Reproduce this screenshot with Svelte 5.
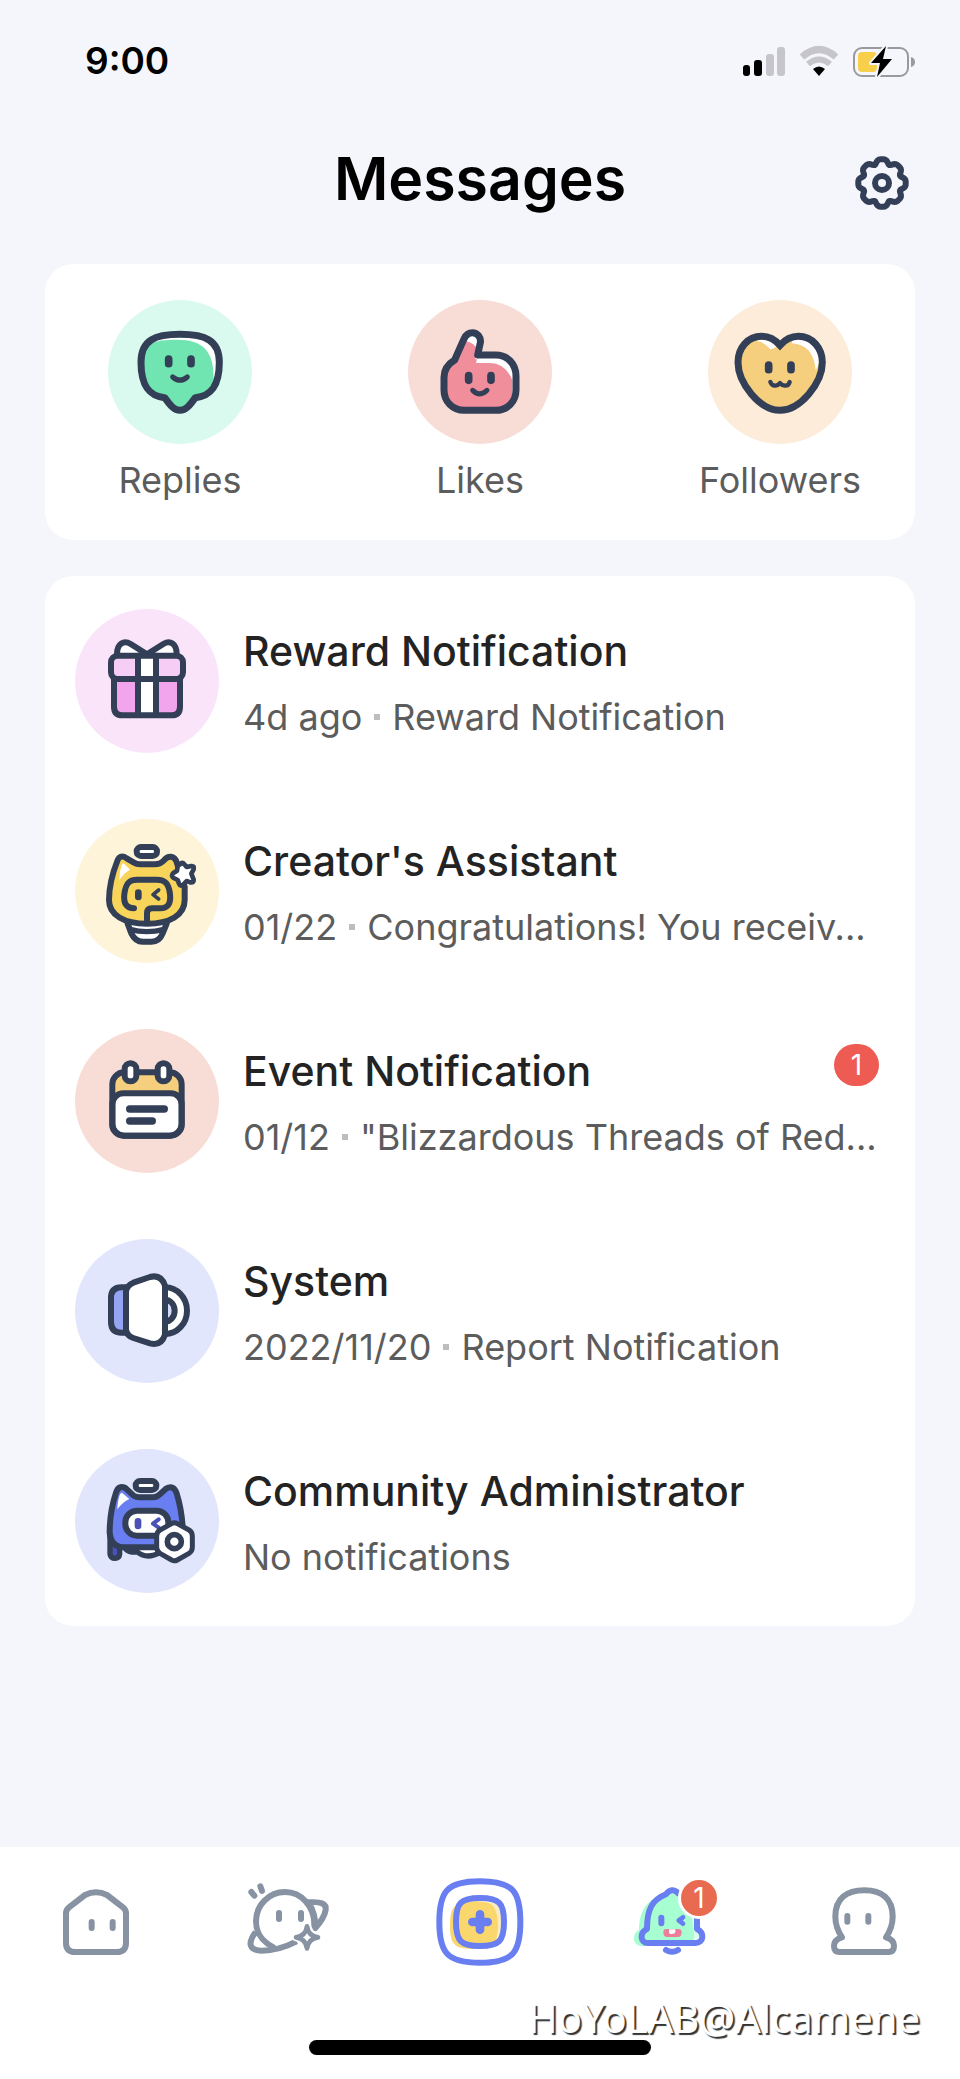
<script>
  const shortcuts = [
    { id: 'replies', label: 'Replies', tint: '#dafaef' },
    { id: 'likes', label: 'Likes', tint: '#f8ddd7' },
    { id: 'followers', label: 'Followers', tint: '#fcecd9' }
  ];

  const messages = [
    { id: 'reward', title: 'Reward Notification', date: '4d ago', text: 'Reward Notification', tint: '#fae4fa' },
    { id: 'creator', title: "Creator's Assistant", date: '01/22', text: 'Congratulations! You receiv...', tint: '#fdf4da' },
    { id: 'event', title: 'Event Notification', date: '01/12', text: '"Blizzardous Threads of Red...', tint: '#f8ddd7', unread: 1 },
    { id: 'system', title: 'System', date: '2022/11/20', text: 'Report Notification', tint: '#e2e6fd' },
    { id: 'admin', title: 'Community Administrator', date: '', text: 'No notifications', tint: '#e2e6fd' }
  ];

  // Eight-lobed outline of the settings gear.
  const gear = Array.from({ length: 160 }, (_, i) => {
    const t = (i / 160) * Math.PI * 2;
    const r = 22.2 + 2.1 * Math.cos(8 * t) - 0.6 * Math.cos(16 * t);
    return `${(28 + r * Math.sin(t)).toFixed(2)},${(28 - r * Math.cos(t)).toFixed(2)}`;
  }).join(' ');
</script>

<div class="screen">
  <div class="status">
    <span class="clock">9:00</span>
    <span class="signals">
      <svg width="42" height="33" viewBox="744 44 42 33" aria-hidden="true">
        <rect x="744" y="64" width="7" height="11" rx="3" fill="#000" />
        <rect x="755" y="59" width="8" height="16" rx="3" fill="#000" />
        <rect x="767" y="53" width="8" height="22" rx="3" fill="#c5c5ca" />
        <rect x="778" y="46" width="8" height="29" rx="3" fill="#c5c5ca" />
      </svg>
      <svg width="40" height="33" viewBox="800 44 40 33" aria-hidden="true">
        <path d="M803 56Q820 41 837 56" fill="none" stroke="#c5c5ca" stroke-width="7" />
        <path d="M809 63Q820 54 831 63" fill="none" stroke="#c5c5ca" stroke-width="6" />
        <path d="M814 68Q820 63 826 68L820 75Z" fill="#000" />
      </svg>
      <svg width="63" height="33" viewBox="853 44 63 33" aria-hidden="true">
        <rect x="854" y="47" width="54" height="28" rx="8" fill="none" stroke="#9a9a9e" stroke-width="2" />
        <path d="M911 56Q915 57 915 61T911 66Z" fill="#9a9a9e" />
        <rect x="858" y="51" width="19" height="20" rx="4" fill="#f8cf4a" />
        <path d="M886 45L871 62H880L877 76L892 58H883Z" fill="#000" stroke="#f5f6fc" stroke-width="4" stroke-linejoin="round" paint-order="stroke" />
      </svg>
    </span>
  </div>

  <header>
    <h1>Messages</h1>
    <button class="settings" aria-label="Settings">
      <svg width="56" height="56" viewBox="0 0 56 56" fill="none" stroke="#323f57">
        <polygon points={gear} stroke-width="6" stroke-linejoin="round" />
        <circle cx="28" cy="28" r="7" stroke-width="6" />
      </svg>
    </button>
  </header>

  <main>
    <section class="card shortcuts">
      {#each shortcuts as s}
        <button class="shortcut">
          <svg class="face" viewBox="54 30 432 432" aria-hidden="true">
            <circle cx="270" cy="246" r="216" fill={s.tint} />
            {#if s.id === 'replies'}
              <path d="M270 133C345 133 388 150 388 217C388 285 365 318 316 323C300 345 288 361 270 361S240 345 224 323C175 318 153 285 153 217C153 150 195 133 270 133Z" fill="#fff" />
              <path d="M153 217C153 160 190 149 262 149C340 149 371 185 371 262C371 300 350 318 316 323C300 345 288 361 270 361S240 345 224 323C175 318 153 285 153 217Z" fill="#70e5b1" />
              <g class="ink">
                <path d="M270 133C345 133 388 150 388 217C388 285 365 318 316 323C300 345 288 361 270 361S240 345 224 323C175 318 153 285 153 217C153 150 195 133 270 133Z" />
                <path d="M236 207V221M303 207V221" stroke-width="23" />
                <path d="M248 261Q270 280 292 261" stroke-width="15" />
              </g>
            {:else if s.id === 'likes'}
              <path d="M263 195H318C352 195 378 222 378 258V300C378 335 352 361 318 361H223C188 361 162 335 162 300V262C162 238 174 222 194 210Q216 160 223 145C229 132 238 128 247 128C262 128 274 143 271 158Z" fill="#fff" />
              <path d="M258 219H300Q345 219 367 270V300C367 335 352 361 318 361H223C188 361 162 335 162 300V262C162 238 174 222 194 210L222 154Q244 154 258 171L256 208H261Z" fill="#f08f9b" />
              <g class="ink">
                <path d="M263 195H318C352 195 378 222 378 258V300C378 335 352 361 318 361H223C188 361 162 335 162 300V262C162 238 174 222 194 210Q216 160 223 145C229 132 238 128 247 128C262 128 274 143 271 158Z" />
                <path d="M236 257V271M303 257V271" stroke-width="23" />
                <path d="M248 301Q270 322 291 301" stroke-width="15" />
              </g>
            {:else}
              <path d="M270 166C254 148 235 139 215 139C172 139 144 175 144 217C144 280 210 361 270 361S397 280 397 217C397 175 368 139 325 139C305 139 286 148 270 166Z" fill="#f6cf7e" />
              <path d="M198 153Q220 153 241 178Q248 178 262 168Q230 140 198 153ZM306 160Q370 164 377 240Q395 215 385 185Q365 135 306 150Z" fill="#fff" />
              <g class="ink">
                <path d="M270 166C254 148 235 139 215 139C172 139 144 175 144 217C144 280 210 361 270 361S397 280 397 217C397 175 368 139 325 139C305 139 286 148 270 166Z" stroke-linejoin="miter" />
                <path d="M236 225V239M303 225V239" stroke-width="23" />
                <path d="M241 276Q246 288 256 287Q265 286 270 279Q275 286 285 287Q295 288 299 276" stroke-width="13" />
              </g>
            {/if}
          </svg>
          <span class="label">{s.label}</span>
        </button>
      {/each}
    </section>

    <section class="card list">
      {#each messages as m}
        <a class="message" href="#{m.id}">
          <svg class="face" viewBox="45 57 432 432" aria-hidden="true">
            <circle cx="261" cy="273" r="216" fill={m.tint} />
            {#if m.id === 'reward'}
              <rect x="153" y="197" width="216" height="70" rx="20" fill="#f6cef5" />
              <path d="M162 267H360V350Q360 376 334 376H188Q162 376 162 350Z" fill="#f2a4ed" />
              <rect x="234" y="197" width="54" height="180" fill="#fff" />
              <path d="M171 193C171 160 192 150 212 162L261 193L310 162C330 150 350 160 350 193Z" fill="#fff" />
              <g class="ink thin">
                <path d="M171 193C171 160 192 150 212 162L261 193L310 162C330 150 350 160 350 193" />
                <rect x="153" y="197" width="216" height="70" rx="20" />
                <path d="M162 267V350Q162 376 188 376H334Q360 376 360 350V267M234 197V376M288 197V376" />
              </g>
            {:else if m.id === 'creator'}
              <path d="M203 366L214 400Q226 425 248 425H275Q298 425 308 400L320 366Z" fill="#fff" />
              <path d="M147 300Q147 245 173 180Q182 162 200 175L222 188Q230 193 240 193H285Q300 193 310 183C325 164 345 166 351 190L374 260V300C374 345 330 371 261 371S147 345 147 300Z" fill="#f8d45b" />
              <path d="M191 190L210 209Q190 220 178 241Q178 215 185 196Q187 190 191 190Z" fill="#fff" />
              <g class="ink thin">
                <path d="M203 371L214 400Q226 425 248 425H275Q298 425 308 400L320 371" />
                <path d="M210 388Q260 402 312 388" stroke-width="16" />
                <path d="M147 300Q147 245 173 180Q182 162 200 175L222 188Q230 193 240 193H285Q300 193 310 183C325 164 345 166 351 190L374 260V300C374 345 330 371 261 371S147 345 147 300Z" />
                <path d="M222 325C198 325 190 308 193 282C197 252 206 239 232 239H290C316 239 326 252 330 282C333 310 325 325 300 325H276Q261 325 261 340V366" />
                <path d="M235 278V291" stroke-width="20" />
                <path d="M296 270L279 284L296 297" stroke-width="11" />
                <rect x="230" y="141" width="61" height="27" rx="13" fill="#fff" />
                <path d="M360 194Q366 184 373 193L380 201L394 198Q404 197 401 208L394 221L401 239Q402 249 391 247L380 243L370 254Q361 261 357 251L353 240L341 234Q331 227 340 219L351 212L353 199Q355 194 360 194Z" fill="#fff" stroke-width="14" />
              </g>
            {:else if m.id === 'event'}
              <rect x="157" y="187" width="208" height="190" rx="36" fill="#f6cf7e" />
              <rect x="157" y="250" width="208" height="127" rx="33" fill="#fff" />
              <g class="ink thin">
                <rect x="157" y="187" width="208" height="190" rx="36" />
                <rect x="157" y="250" width="208" height="127" rx="33" />
                <rect x="194" y="160" width="35" height="54" rx="17" fill="#fff" />
                <rect x="293" y="160" width="35" height="54" rx="17" fill="#fff" />
                <path d="M209 297H313M209 333H277" stroke-width="22" />
              </g>
            {:else if m.id === 'system'}
              <path d="M198 202H182Q153 202 153 234V306Q153 338 182 338H198Z" fill="#96a4f4" />
              <path d="M315 202A66 70 0 0 1 315 342Z" fill="#fff" />
              <path d="M315 239A29 33 0 0 1 315 305Z" fill="#d5dbfc" />
              <path d="M198 215Q200 196 220 188L270 171Q303 162 315 197V344Q303 379 270 370L220 354Q200 347 198 328Z" fill="#fff" />
              <g class="ink thin">
                <path d="M198 202H185Q153 202 153 234V306Q153 338 185 338H198" />
                <path d="M315 202A66 70 0 0 1 315 342M315 239A29 33 0 0 1 315 305" />
                <path d="M198 215Q200 196 220 188L270 171Q303 162 315 197V344Q303 379 270 370L220 354Q200 347 198 328Z" />
              </g>
            {:else}
              <path d="M150 315V372Q152 385 165 385T179 372V345Z" fill="#4b51b5" />
              <path d="M197 355Q208 368 232 366Q262 390 302 366V350Z" fill="#fff" />
              <path d="M149 308Q149 245 168 188Q176 164 196 174L221 197Q228 202 238 202H280Q290 202 298 194L318 176Q341 163 350 190Q367 245 369 308C366 338 352 352 330 352H195Q153 352 149 308Z" fill="#697ef1" />
              <path d="M186 188L208 207Q188 216 172 238Q173 211 180 193Q182 188 186 188Z" fill="#fff" />
              <g class="ink thin">
                <path d="M150 315V372Q152 385 165 385T179 372V350M197 357Q208 368 232 366Q262 390 302 366" stroke-width="16" />
                <path d="M149 308Q149 245 168 188Q176 164 196 174L221 197Q228 202 238 202H280Q290 202 298 194L318 176Q341 163 350 190Q367 245 369 308C366 338 352 352 330 352H195Q153 352 149 308Z" />
                <rect x="196" y="242" width="129" height="75" rx="35" fill="#fff" />
                <path d="M234 274V288" stroke="#4b51b5" stroke-width="20" />
                <path d="M296 268L279 281L296 293" stroke="#4b51b5" stroke-width="12" />
                <rect x="227" y="153" width="62" height="27" rx="13" fill="#fff" />
                <path d="M335 281Q343 276 352 281L387 300Q397 306 397 318V352Q397 364 387 370L352 390Q343 395 335 390L300 370Q290 364 290 352V318Q290 306 300 300Z" fill="#fff" stroke-width="15" />
                <circle cx="343" cy="335" r="21" stroke-width="17" />
              </g>
            {/if}
          </svg>
          <span class="body">
            <span class="top">
              <span class="title">{m.title}</span>
              {#if m.unread}<span class="unread">{m.unread}</span>{/if}
            </span>
            <span class="sub">
              {#if m.date}<span>{m.date}</span><i></i>{/if}<span>{m.text}</span>
            </span>
          </span>
        </a>
      {/each}
    </section>
  </main>

  <footer>
    <nav>
      <button aria-label="Home">
        <svg class="tab" viewBox="24 39 288 288">
          <path d="M78 160Q78 149 87 142L135 105Q168 88 201 105L249 142Q258 149 258 160V248Q258 276 230 276H106Q78 276 78 248Z" />
          <path d="M155 186V204M218 186V204" />
        </svg>
      </button>
      <button aria-label="Explore">
        <svg class="tab" viewBox="600 39 288 288">
          <path d="M700 262C660 240 648 215 648 184C648 135 687 96 735 96S824 138 823 196" />
          <path d="M806 127C845 124 860 132 857 150Q853 174 826 204Q828 165 806 127Z" />
          <path d="M647 216C620 252 630 272 665 272C700 272 735 262 770 244" stroke-linecap="butt" />
          <path d="M634 96L643 107M661 79L666 93M717 159V177M783 159V177" />
          <path d="M801 199Q805 228 834 232Q805 236 801 265Q797 236 768 232Q797 228 801 199Z" fill="#fff" stroke="#fff" stroke-width="24" />
          <path d="M801 199Q805 228 834 232Q805 236 801 265Q797 236 768 232Q797 228 801 199Z" fill="#fff" stroke-width="14" />
        </svg>
      </button>
      <button aria-label="Create post">
        <svg class="tab blue" viewBox="1176 39 288 288">
          <path d="M1320 64C1420 64 1441 95 1441 186S1420 308 1320 308S1198 277 1198 186S1220 64 1320 64Z" />
          <path d="M1302 124C1365 124 1374 140 1374 195S1365 267 1302 267S1230 250 1230 195S1245 124 1302 124Z" fill="#f9d76c" stroke="none" />
          <path d="M1345 118Q1384 120 1388 165V215Q1385 235 1374 240V190Q1374 145 1345 126Z" fill="#fdebc0" stroke="none" />
          <path d="M1320 114C1378 114 1392 129 1392 186S1378 258 1320 258S1248 243 1248 186S1262 114 1320 114Z" />
          <path d="M1320 163V209M1297 186H1343" class="plus" />
        </svg>
      </button>
      <button aria-label="Messages, 1 unread">
        <svg class="tab blue" viewBox="72 39 288 288">
          <path d="M285 205V170Q282 120 235 105Q218 96 200 101C145 112 117 150 117 210Q101 218 102 238Q105 258 124 258H260Q290 245 285 205Z" fill="#a7fed0" stroke="none" />
          <path d="M270 160Q282 190 282 235H300V200L291 170Z" fill="#d9fdeb" stroke="none" />
          <path d="M235 100Q215 80 198 103C155 120 141 150 141 207C118 218 120 249 144 249H286C312 249 314 218 291 207V168" />
          <path d="M184 173V190" />
          <path d="M249 172L236 181L249 191" fill="#697ef1" stroke-width="14" />
          <path d="M198 270Q216 281 234 270" />
          <path d="M199 207H235Q245 207 245 217Q245 231 234 231H201Q190 231 190 217Q190 207 199 207Z" fill="#ec7e9b" stroke="none" />
          <path d="M207 208H226V216Q225 222 216 222T207 216Z" fill="#fff" stroke="none" />
        </svg>
        <span class="count">1</span>
      </button>
      <button aria-label="Profile">
        <svg class="tab" viewBox="648 39 288 288">
          <path d="M793 91C845 91 878 115 878 170Q878 202 858 232C877 237 882 247 882 258Q882 276 865 276H719Q702 276 702 258C702 247 707 237 726 232Q706 202 706 170C706 115 740 91 793 91Z" />
          <path d="M742 168V185M805 168V185" />
        </svg>
      </button>
    </nav>
    <div class="indicator"></div>
    <span class="watermark">HoYoLAB@Alcamene</span>
  </footer>
</div>

<style>
  :global(body) {
    margin: 0;
    background: #f5f6fc;
  }
  .screen {
    display: flex;
    flex-direction: column;
    min-height: 100vh;
    font-family: Inter, "Noto Sans", sans-serif;
    color: #232323;
  }
  button {
    padding: 0;
    border: 0;
    background: none;
    font: inherit;
    color: inherit;
  }
  svg {
    display: block;
  }
  .status {
    display: flex;
    justify-content: space-between;
    align-items: center;
    padding: 37px 44px 17px 85px;
    line-height: 48px;
  }
  .clock {
    font-size: 37px;
    font-weight: 600;
    color: #000;
  }
  .signals {
    display: flex;
    gap: 14px;
  }
  header {
    display: grid;
    grid-template-columns: 1fr auto 1fr;
    align-items: center;
    height: 154px;
    padding: 0 50px 8px;
  }
  h1 {
    grid-column: 2;
    margin: 0;
    font-size: 59px;
    font-weight: 600;
    line-height: 72px;
    color: #000;
  }
  .settings {
    justify-self: end;
    padding-top: 8px;
  }
  main {
    flex: 1;
    display: flex;
    flex-direction: column;
    gap: 36px;
    padding: 0 45px 36px;
  }
  .card {
    background: #fff;
    border-radius: 28px;
  }
  .shortcuts {
    display: flex;
    justify-content: space-between;
    padding: 36px 45px;
  }
  .shortcut {
    display: flex;
    flex-direction: column;
    align-items: center;
    gap: 12px;
    width: 180px;
    font-size: 36px;
    line-height: 48px;
    color: #5c5c5c;
  }
  .face {
    flex: none;
    width: 144px;
    height: 144px;
  }
  .ink {
    fill: none;
    stroke: #323f57;
    stroke-width: 21px;
    stroke-linecap: round;
    stroke-linejoin: round;
  }
  .ink.thin {
    stroke-width: 18px;
  }
  .list {
    display: flex;
    flex-direction: column;
    gap: 66px;
    padding: 33px 36px 33px 30px;
  }
  .message {
    display: flex;
    gap: 24px;
    color: inherit;
    text-decoration: none;
  }
  .body {
    flex: 1;
    display: flex;
    flex-direction: column;
    gap: 15px;
    min-width: 0;
    padding-top: 15px;
    white-space: nowrap;
  }
  .top {
    display: flex;
    justify-content: space-between;
  }
  .title {
    font-size: 41px;
    font-weight: 500;
    line-height: 54px;
  }
  .unread {
    align-self: flex-start;
    width: 45px;
    height: 42px;
    border-radius: 21px;
    background: #ed5b53;
    color: #fff;
    font-size: 28px;
    line-height: 42px;
    text-align: center;
  }
  .sub {
    display: flex;
    align-items: center;
    font-size: 36px;
    line-height: 48px;
    color: #5c5c5c;
  }
  .sub i {
    flex: none;
    width: 6px;
    height: 6px;
    margin: 0 12px;
    background: #bdbdbd;
  }
  footer {
    position: relative;
    padding-bottom: 24px;
    background: #fff;
  }
  nav {
    display: grid;
    grid-template-columns: repeat(5, 1fr);
  }
  nav button {
    position: relative;
    display: grid;
    place-items: center;
    height: 148px;
  }
  .tab {
    width: 96px;
    height: 96px;
    fill: none;
    stroke: #8792a3;
    stroke-width: 18px;
    stroke-linecap: round;
    stroke-linejoin: round;
  }
  .tab.blue {
    stroke: #697ef1;
  }
  .plus {
    stroke-width: 26px;
  }
  .count {
    position: absolute;
    top: 30px;
    left: calc(50% + 6px);
    width: 36px;
    height: 36px;
    border: 3px solid #fff;
    border-radius: 50%;
    background: #e76a51;
    color: #fff;
    font-size: 28px;
    line-height: 36px;
    text-align: center;
  }
  .indicator {
    width: 342px;
    height: 15px;
    margin: 45px auto 0;
    border-radius: 8px;
    background: #000;
  }
  .watermark {
    position: absolute;
    right: 40px;
    bottom: 34px;
    font: 40px/54px "Noto Sans", sans-serif;
    color: #fff;
    text-shadow: 2px 2px 1px #333;
  }
</style>
